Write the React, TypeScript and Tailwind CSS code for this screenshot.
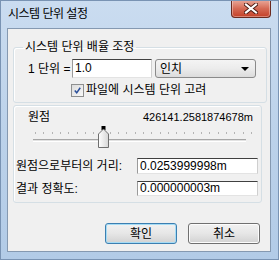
import React from 'react';

const ui = "font-['Liberation_Sans','Noto_Sans_CJK_KR',sans-serif]";

function TextBox({ value, className }: { value: string; className: string }) {
    return (
        <div className={`bg-white border border-t-[#404040] border-l-[#9a9a9a] border-r-[#cfcfcf] border-b-[#e3e3e3] flex items-center pl-[2px] text-[12px] leading-[13px] text-black ${className}`}>
            {value}
        </div>
    );
}

function Slider() {
    const ticks = Array.from({ length: 27 }, (_, i) => 5 + i * 8.3);
    return (
        <svg width="230" height="22" viewBox="0 0 230 22" className="block">
            <defs>
                <linearGradient id="thumb" x1="0" y1="0" x2="1" y2="0">
                    <stop offset="0" stopColor="#ffffff" />
                    <stop offset="1" stopColor="#d6d6d6" />
                </linearGradient>
            </defs>
            {ticks.map((x, i) => (
                <rect key={i} x={Math.round(x)} y="6" width="1" height="2" fill="#b4b4b4" />
            ))}
            <rect x="3" y="13" width="213" height="1" fill="#a6a6a6" />
            <rect x="3" y="14" width="213" height="1" fill="#e2e2e2" />
            <rect x="3" y="15" width="213" height="1" fill="#ffffff" />
            <rect x="71.5" y="0" width="4" height="4" fill="#000" />
            <polygon points="73.5,3 78.5,8 78.5,21.5 68.5,21.5 68.5,8" fill="url(#thumb)" stroke="#6f6f6f" strokeWidth="1" />
        </svg>
    );
}

export default function App() {
    return (
        <div className={`${ui} w-[279px] h-[260px] flex flex-col bg-gradient-to-b from-[#cadcf0] via-[#bcd2ea] to-[#b2cbe7] border border-[#7993b3] overflow-hidden`}>
            {/* title bar */}
            <div className="h-[27px] flex items-start justify-between pl-[7px] pr-[7px] shrink-0">
                <span className="mt-[5px] text-[12px] leading-[16px] tracking-[-0.5px] text-black">시스템 단위 설정</span>
                <div className="w-[40px] h-[18px] -mt-[1px] rounded-b-[4px] border border-t-0 border-[#6b2a1f] bg-gradient-to-b from-[#e9a99b] via-[#d56a55] to-[#c43f26] flex items-center justify-center shadow-[inset_0_0_0_1px_rgba(255,255,255,0.35)]">
                    <svg width="14" height="11" viewBox="0 0 14 11">
                        <path d="M2 1.5 L12 9.5 M12 1.5 L2 9.5" stroke="#4a1810" strokeWidth="4" strokeLinecap="square" />
                        <path d="M2 1.5 L12 9.5 M12 1.5 L2 9.5" stroke="#ffffff" strokeWidth="2.2" strokeLinecap="square" />
                    </svg>
                </div>
            </div>

            {/* client area */}
            <div className="flex-1 ml-[6px] mr-[7px] mb-[7px] border border-[#8599b1] bg-[#f0f0f0] pl-[5px] pt-[11px] flex flex-col text-[12px] text-black">
                <fieldset className="w-[254px] border border-[#d5dfe5] rounded-[3px] shadow-[inset_1px_1px_0_#ffffff] pb-[5px]">
                    <legend className="ml-[9px] px-[2px] leading-[14px]">시스템 단위 배율 조정</legend>
                    <div className="flex items-center mt-[5px] pl-[14px]">
                        <span className="w-[44px] leading-[14px] whitespace-nowrap">1 단위 =</span>
                        <TextBox value="1.0" className="w-[80px] h-[19px]" />
                        <div className="ml-[3px] w-[101px] h-[19px] rounded-[3px] border border-[#8a8a8a] bg-gradient-to-b from-[#f4f4f4] via-[#ececec] to-[#dcdcdc] flex items-center justify-between pl-[4px] pr-[6px]">
                            <span className="leading-[14px]">인치</span>
                            <svg width="8" height="4" viewBox="0 0 8 4">
                                <polygon points="0,0 8,0 4,4" fill="#000" />
                            </svg>
                        </div>
                    </div>
                    <div className="flex items-center mt-[5px] ml-[57px]">
                        <div className="w-[13px] h-[13px] border border-[#8e8f8f] bg-gradient-to-br from-[#dcdcdc] to-[#f8f8f8] p-[2px] flex items-center justify-center">
                            <svg width="9" height="9" viewBox="0 0 9 9">
                                <path d="M1 4.5 L3.5 7.5 L8 1" fill="none" stroke="#2b4f9a" strokeWidth="2" />
                            </svg>
                        </div>
                        <span className="ml-[2px] leading-[14px]">파일에 시스템 단위 고려</span>
                    </div>
                </fieldset>

                <div className="mt-[2px] w-[249px] border border-[#d5dfe5] rounded-[3px] shadow-[inset_1px_1px_0_#ffffff] pb-[6px]">
                    <div className="flex items-center justify-between pt-[4px] pl-[14px] pr-[8px]">
                        <span className="leading-[14px]">원점</span>
                        <span className="text-[11px] leading-[14px]">426141.2581874678m</span>
                    </div>
                    <div className="mt-[2px] ml-[16px]">
                        <Slider />
                    </div>
                    <div className="flex items-center mt-[10px] pl-[2px]">
                        <span className="w-[121px] leading-[14px] whitespace-nowrap">원점으로부터의 거리:</span>
                        <TextBox value="0.0253999998m" className="w-[121px] h-[16px]" />
                    </div>
                    <div className="flex items-center mt-[7px] pl-[2px]">
                        <span className="w-[121px] leading-[14px] whitespace-nowrap">결과 정확도:</span>
                        <TextBox value="0.000000003m" className="w-[121px] h-[15px]" />
                    </div>
                </div>

                <div className="flex mt-[20px] ml-[92px] gap-[11px]">
                    <button className="w-[72px] h-[21px] rounded-[3px] border border-[#3c7fb1] bg-gradient-to-b from-[#f2f2f2] via-[#e6e6e6] to-[#d2d2d2] shadow-[inset_0_0_0_1px_#a6dcf5] flex items-center justify-center leading-[14px]">
                        확인
                    </button>
                    <button className="w-[72px] h-[21px] rounded-[3px] border border-[#707070] bg-gradient-to-b from-[#f2f2f2] via-[#e6e6e6] to-[#d2d2d2] shadow-[inset_0_0_0_1px_#fcfcfc] flex items-center justify-center leading-[14px]">
                        취소
                    </button>
                </div>
            </div>
        </div>
    );
}
